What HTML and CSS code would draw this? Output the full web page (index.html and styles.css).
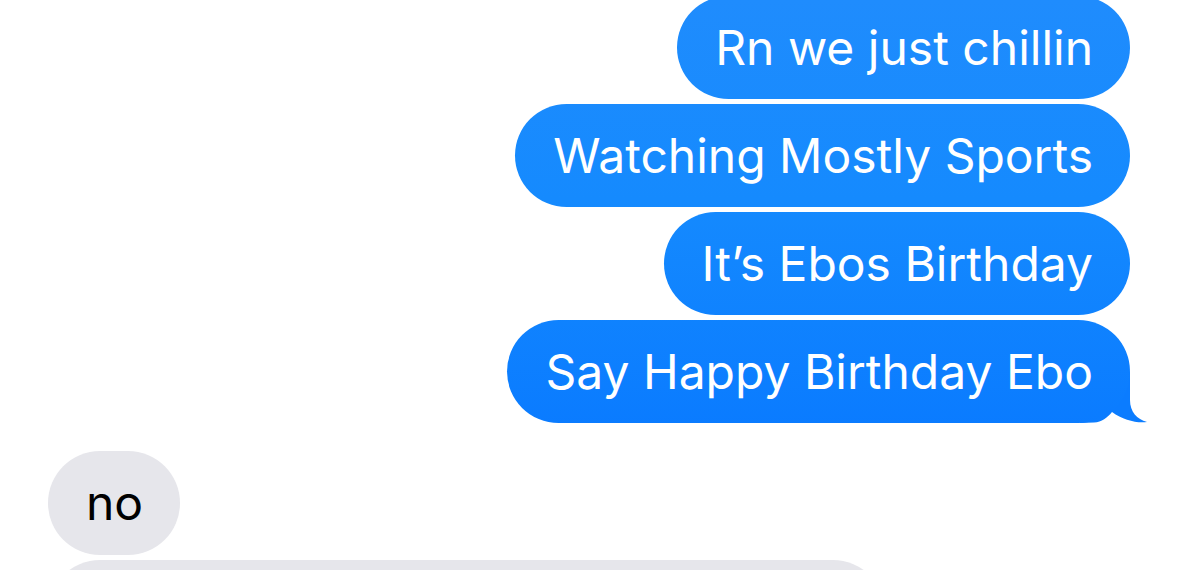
FILE: index.html
```html
<!DOCTYPE html>
<html lang="en">
<head>
  <meta charset="UTF-8" />
  <title>Messages</title>
  <link rel="stylesheet" href="styles.css">
</head>
<body>
  <main class="conversa">
    <div class="grupo enviado">
      <div class="bolha azul">Rn we just chillin</div>
      <div class="bolha azul">Watching Mostly Sports</div>
      <div class="bolha azul">It’s Ebos Birthday</div>
      <div class="bolha azul com-cauda">
        Say Happy Birthday Ebo
        <svg class="cauda" width="67" height="52" viewBox="0 0 67 52">
          <path d="M0 0 H50 V28 C50 40 57 47 67 50 C57 51.5 43 48 32 40 C27 46 22 50 14 50.5 L0 51 Z" fill="#0b7cff"/>
        </svg>
      </div>
    </div>
    <div class="grupo recebido">
      <div class="bolha cinza">no</div>
      <div class="bolha cinza larga">&nbsp;</div>
    </div>
  </main>
</body>
</html>
```

FILE: styles.css
```css
html {
  background: #ffffff;
}

html, body {
  margin: 0;
  height: 100%;
  overflow: hidden;
}

body {
  font-family: 'Inter', 'Roboto', sans-serif;
}

.conversa {
  display: flex;
  flex-direction: column;
  gap: 28px;
  margin-top: -4px;
}

.grupo {
  display: flex;
  flex-direction: column;
  gap: 5px;
}

.enviado {
  align-items: flex-end;
  padding-right: 49px;
}

.recebido {
  align-items: flex-start;
  padding-left: 48px;
}

.bolha {
  position: relative;
  box-sizing: border-box;
  height: 103px;
  line-height: 103px;
  padding: 0 37px 0 38px;
  border-radius: 52px;
  font-size: 48px;
  white-space: nowrap;
}

.azul {
  color: #ffffff;
  background: linear-gradient(180deg, #1f8cfd 0px, #158afe 200px, #0a7bff 430px);
  background-attachment: fixed;
}

.cinza {
  color: #000000;
  background: #e6e6eb;
  height: 104px;
}

.larga {
  width: 837px;
}

/* a cauda fica atrás da bolha, só a ponta aparece */
.cauda {
  position: absolute;
  left: calc(100% - 50px);
  bottom: -1px;
  z-index: -1;
}
```
